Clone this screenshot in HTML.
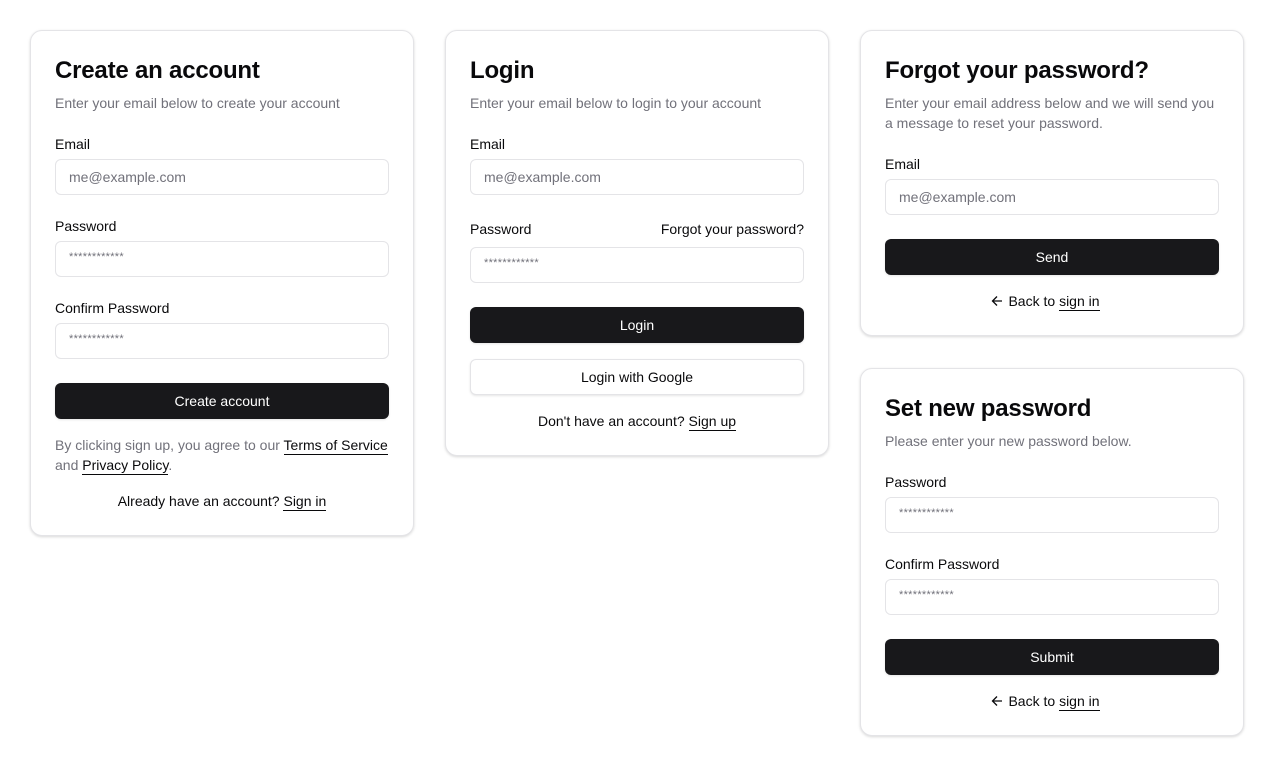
<!DOCTYPE html>
<html><head><meta charset="utf-8"><style>
*{box-sizing:border-box;margin:0;padding:0}
body{width:1274px;height:767px;background:#fff;font-family:"Liberation Sans",Arial,sans-serif;color:#09090b;position:relative;overflow:hidden}
.card{position:absolute;border:1px solid #e4e4e7;border-radius:12px;background:#fff;box-shadow:0 1px 3px rgba(0,0,0,.1),0 1px 2px rgba(0,0,0,.06)}
.t{position:absolute;font-size:14px;line-height:20px;white-space:nowrap}
.h{position:absolute;font-size:24px;font-weight:bold;line-height:30px;white-space:nowrap;letter-spacing:-.2px}
.g{color:#71717a}
.in{position:absolute;width:334px;height:36px;border:1px solid #e4e4e7;border-radius:6px;font-size:14px;color:#71717a;padding-left:13px;line-height:34px}
.pw{font-size:11px;line-height:30px;letter-spacing:.3px}
.btn{position:absolute;width:334px;height:36px;border-radius:6px;background:#18181b;color:#fff;font-size:14px;text-align:center;line-height:36px;box-shadow:0 1px 2px rgba(0,0,0,.1)}
.ob{background:#fff;color:#09090b;border:1px solid #e4e4e7;line-height:34px}
.c{text-align:center;width:334px}
.bk{padding-right:13px}
u{text-decoration:none;border-bottom:1px solid #09090b;padding-bottom:1px;color:#09090b}
</style></head><body>
<div class="card" style="left:30px;top:30px;width:384px;height:506px"></div>
<div class="card" style="left:445px;top:30px;width:384px;height:426px"></div>
<div class="card" style="left:860px;top:30px;width:384px;height:306px"></div>
<div class="card" style="left:860px;top:368px;width:384px;height:368px"></div>

<div class="h" style="left:55px;top:56px">Create an account</div>
<div class="t g" style="left:55px;top:93px">Enter your email below to create your account</div>
<div class="t" style="left:55px;top:134px">Email</div>
<div class="in" style="left:55px;top:159px">me@example.com</div>
<div class="t" style="left:55px;top:216px">Password</div>
<div class="in pw" style="left:55px;top:241px">************</div>
<div class="t" style="left:55px;top:298px">Confirm Password</div>
<div class="in pw" style="left:55px;top:323px">************</div>
<div class="btn" style="left:55px;top:383px">Create account</div>
<div class="t g" style="left:55px;top:435px">By clicking sign up, you agree to our <u>Terms of Service</u></div>
<div class="t g" style="left:55px;top:455px">and <u>Privacy Policy</u>.</div>
<div class="t c" style="left:55px;top:491px">Already have an account? <u>Sign in</u></div>

<div class="h" style="left:470px;top:56px">Login</div>
<div class="t g" style="left:470px;top:93px">Enter your email below to login to your account</div>
<div class="t" style="left:470px;top:134px">Email</div>
<div class="in" style="left:470px;top:159px">me@example.com</div>
<div class="t" style="left:470px;top:219px">Password</div>
<div class="t" style="left:470px;top:219px;width:334px;text-align:right">Forgot your password?</div>
<div class="in pw" style="left:470px;top:247px">************</div>
<div class="btn" style="left:470px;top:307px">Login</div>
<div class="btn ob" style="left:470px;top:359px">Login with Google</div>
<div class="t c" style="left:470px;top:411px">Don't have an account? <u>Sign up</u></div>

<div class="h" style="left:885px;top:56px">Forgot your password?</div>
<div class="t g" style="left:885px;top:93px">Enter your email address below and we will send you</div>
<div class="t g" style="left:885px;top:113px">a message to reset your password.</div>
<div class="t" style="left:885px;top:154px">Email</div>
<div class="in" style="left:885px;top:179px">me@example.com</div>
<div class="btn" style="left:885px;top:239px">Send</div>
<div class="t c bk" style="left:885px;top:291px"><svg width="12" height="12" viewBox="0 0 12 12" style="vertical-align:-1px;margin-right:5px"><path d="M11 6H1.5M6 1.5L1.5 6 6 10.5" fill="none" stroke="#09090b" stroke-width="1.3"/></svg>Back to <u>sign in</u></div>

<div class="h" style="left:885px;top:394px">Set new password</div>
<div class="t g" style="left:885px;top:431px">Please enter your new password below.</div>
<div class="t" style="left:885px;top:472px">Password</div>
<div class="in pw" style="left:885px;top:497px">************</div>
<div class="t" style="left:885px;top:554px">Confirm Password</div>
<div class="in pw" style="left:885px;top:579px">************</div>
<div class="btn" style="left:885px;top:639px">Submit</div>
<div class="t c bk" style="left:885px;top:691px"><svg width="12" height="12" viewBox="0 0 12 12" style="vertical-align:-1px;margin-right:5px"><path d="M11 6H1.5M6 1.5L1.5 6 6 10.5" fill="none" stroke="#09090b" stroke-width="1.3"/></svg>Back to <u>sign in</u></div>
</body></html>
